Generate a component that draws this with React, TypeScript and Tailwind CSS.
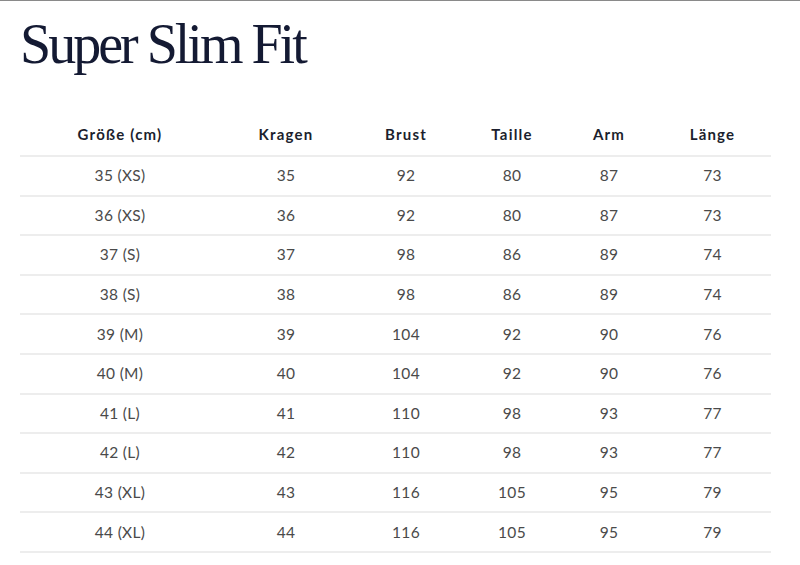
import React from 'react';

const ROWS = [
  ['35 (XS)', '35', '92', '80', '87', '73'],
  ['36 (XS)', '36', '92', '80', '87', '73'],
  ['37 (S)', '37', '98', '86', '89', '74'],
  ['38 (S)', '38', '98', '86', '89', '74'],
  ['39 (M)', '39', '104', '92', '90', '76'],
  ['40 (M)', '40', '104', '92', '90', '76'],
  ['41 (L)', '41', '110', '98', '93', '77'],
  ['42 (L)', '42', '110', '98', '93', '77'],
  ['43 (XL)', '43', '116', '105', '95', '79'],
  ['44 (XL)', '44', '116', '105', '95', '79'],
];

const HEADERS = ['Größe (cm)', 'Kragen', 'Brust', 'Taille', 'Arm', 'Länge'];

const COLS = 'grid grid-cols-[200px_132px_108px_104px_90px_117px]';

export default function App() {
  return (
    <div className="w-[800px] h-[565px] bg-white border-t border-[#8a8a8a] overflow-hidden">
      <h1 className="pl-[20px] pt-[15px] text-[56px] leading-none tracking-[-3px] text-[#141a33] font-['Liberation_Serif',serif]">
        Super Slim Fit
      </h1>

      <div className="mt-[43px] ml-[20px] w-[751px] font-['Lato',sans-serif]">
        <div className={`${COLS} h-[42px] pb-[2px] items-center border-b-2 border-[#ededed]`}>
          {HEADERS.map((h) => (
            <div key={h} className="text-center text-[15px] font-bold tracking-[1.2px] text-[#1c1f2e]">
              {h}
            </div>
          ))}
        </div>
        {ROWS.map((row) => (
          <div key={row[0]} className={`${COLS} h-[39.6px] items-center border-b-2 border-[#ededed]`}>
            {row.map((cell, i) => (
              <div key={i} className="text-center text-[15.5px] tracking-[0.3px] text-[#4a4a4a]">
                {cell}
              </div>
            ))}
          </div>
        ))}
      </div>
    </div>
  );
}
